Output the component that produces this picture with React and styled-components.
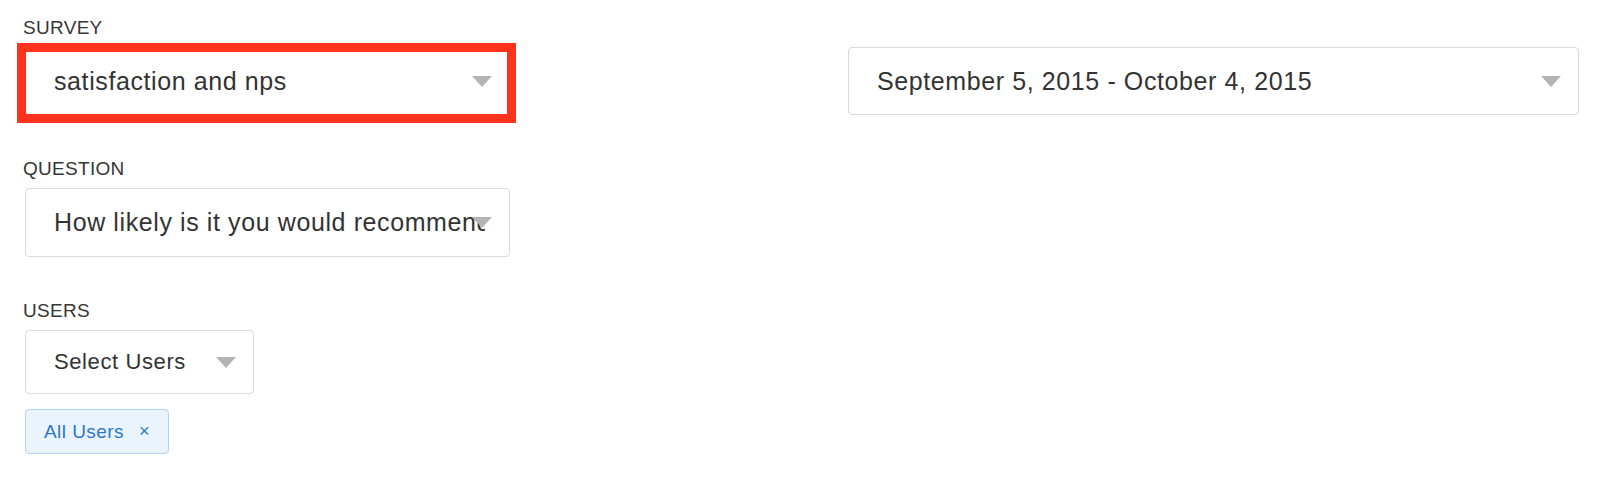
import React from "react";
import styled, { createGlobalStyle } from "styled-components";

const GlobalStyle = createGlobalStyle`
  body {
    margin: 0;
    background: #fff;
    font-family: "Liberation Sans", Arial, sans-serif;
  }
`;

const Page = styled.div`
  display: grid;
  grid-template-columns: 485px 1fr;
  column-gap: 338px;
  padding: 18px 21px 0 25px;
`;

const LeftColumn = styled.div`
  display: flex;
  flex-direction: column;
  gap: 44px;
`;

const RightColumn = styled.div`
  padding-top: 29px;
`;

const Field = styled.div`
  display: flex;
  flex-direction: column;
  align-items: flex-start;
`;

const Label = styled.label`
  margin: 0 0 9px -2px;
  font-size: 19px;
  line-height: 20px;
  letter-spacing: 0.3px;
  text-transform: uppercase;
  color: #363636;
`;

const Select = styled.div`
  position: relative;
  display: flex;
  align-items: center;
  box-sizing: border-box;
  width: ${(props) => props.$width || "100%"};
  height: ${(props) => props.$height}px;
  padding: 0 17px 0 28px;
  border: 1px solid #dadada;
  border-radius: 4px;
  background: #fff;
  color: #333;
  font-size: ${(props) => props.$size || 25}px;
  letter-spacing: 0.6px;
  cursor: pointer;
`;

const Value = styled.span`
  flex: 1;
  min-width: 0;
  overflow: hidden;
  white-space: nowrap;
`;

const Caret = styled.span`
  flex-shrink: 0;
  width: 0;
  height: 0;
  margin-left: -13px;
  border-left: 10px solid transparent;
  border-right: 10px solid transparent;
  border-top: 11px solid #b4b4b4;
`;

const Highlight = styled.div`
  position: absolute;
  top: -5px;
  left: -9px;
  right: -7px;
  bottom: -9px;
  border: 9px solid #fd331d;
  pointer-events: none;
`;

const Tag = styled.div`
  display: inline-flex;
  align-items: center;
  box-sizing: border-box;
  height: 45px;
  margin-top: 15px;
  padding: 0 18px;
  border: 1px solid #b3d3f3;
  border-radius: 4px;
  background: #eaf4fe;
  color: #2b77c9;
  font-size: 19px;
  letter-spacing: 0.45px;
`;

const Remove = styled.span`
  margin-left: 15px;
  font-size: 18px;
  cursor: pointer;
`;

const Dropdown = ({ value, width, height, size, highlighted }) => (
  <Select $width={width} $height={height} $size={size}>
    <Value>{value}</Value>
    <Caret />
    {highlighted && <Highlight />}
  </Select>
);

const App = () => (
  <>
    <GlobalStyle />
    <Page>
      <LeftColumn>
        <Field>
          <Label>Survey</Label>
          <Dropdown value="satisfaction and nps" height={68} highlighted />
        </Field>
        <Field>
          <Label>Question</Label>
          <Dropdown
            value="How likely is it you would recommend us to a friend or colleague?"
            height={69}
          />
        </Field>
        <Field>
          <Label>Users</Label>
          <Dropdown value="Select Users" width="229px" height={64} size={22} />
          <Tag>
            All Users
            <Remove>×</Remove>
          </Tag>
        </Field>
      </LeftColumn>
      <RightColumn>
        <Dropdown value="September 5, 2015 - October 4, 2015" height={68} />
      </RightColumn>
    </Page>
  </>
);

export default App;
